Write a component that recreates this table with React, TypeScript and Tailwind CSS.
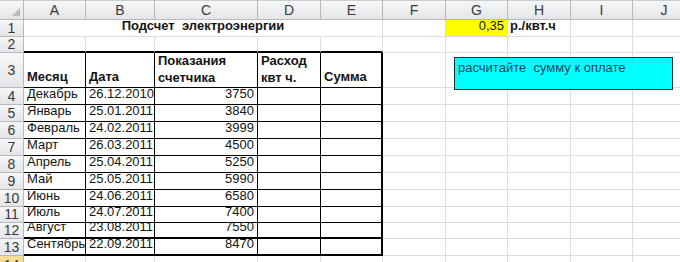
const COLS = ['A', 'B', 'C', 'D', 'E', 'F', 'G', 'H', 'I', 'J']

const rows = [
  ['Декабрь', '26.12.2010', '3750'],
  ['Январь', '25.01.2011', '3840'],
  ['Февраль', '24.02.2011', '3999'],
  ['Март', '26.03.2011', '4500'],
  ['Апрель', '25.04.2011', '5250'],
  ['Май', '25.05.2011', '5990'],
  ['Июнь', '24.06.2011', '6580'],
  ['Июль', '24.07.2011', '7400'],
  ['Август', '23.08.2011', '7550'],
  ['Сентябрь', '22.09.2011', '8470'],
]

const grid = 'border-r border-b border-[#dadcdd]'
const head = 'bg-gradient-to-b from-[#f6f7f8] to-[#e3e5e8] border-r border-b border-[#b6babf] text-[#3a3a3a] flex items-center justify-center text-[14px]'

function RowHead({ n, active }: { n: number; active?: boolean }) {
  return (
    <div className={active ? 'bg-[#f5dd93] border-r border-b border-[#c9b27a] text-[#3a3a3a] flex items-center justify-center text-[14px]' : head}>
      {n}
    </div>
  )
}

function Blank({ n }: { n: number }) {
  return (
    <>
      {Array.from({ length: n }).map((_, i) => (
        <div key={i} className={grid} />
      ))}
    </>
  )
}

// table cell border: thin black inside, heavier on the right and bottom edges
function tb(col: number, row: number) {
  const right = col === 4 ? 'border-r-2' : 'border-r'
  const bottom = row >= 12 ? 'border-b-2' : 'border-b'
  return `${right} ${bottom} border-black`
}

export default function App() {
  return (
    <div className="relative w-[680px] h-[262px] overflow-hidden bg-white text-[13px] text-[#141414]" style={{ fontFamily: '"Liberation Sans", Arial, sans-serif' }}>
      <div className="grid grid-cols-[24px_62px_69px_103px_63px_62px_63px_62px_63px_62px_63px] grid-rows-[20px_17px_16px_35px_17px_17px_17px_17px_17px_17px_17px_16px_16px_17px_20px]">
        {/* column headers */}
        <div className={`${head} relative border-t border-t-[#c9ccd0]`}>
          <svg className="absolute right-[3px] bottom-[3px]" width="8" height="8" viewBox="0 0 8 8">
            <path d="M8 0 L8 8 L0 8 Z" fill="#b9bcc0" />
          </svg>
        </div>
        {COLS.map((c) => (
          <div key={c} className={`${head} border-t border-t-[#c9ccd0]`}>{c}</div>
        ))}

        {/* row 1 */}
        <RowHead n={1} />
        <div className={`col-span-5 ${grid} flex items-end justify-center pb-[1px] font-bold`}>Подсчет&nbsp; электроэнергии</div>
        <div className={grid} />
        <div className="bg-[#ffff00] border-r border-b border-[#dadcdd] flex items-end justify-end px-[3px] pb-[1px]">0,35</div>
        <div className={`${grid} flex items-end px-[2px] pb-[1px] font-bold whitespace-nowrap`}>р./квт.ч</div>
        <Blank n={2} />

        {/* row 2 */}
        <RowHead n={2} />
        {[0, 1, 2, 3, 4].map((i) => (
          <div key={i} className={i === 4 ? 'border-r border-b-2 border-r-[#dadcdd] border-b-black' : 'border-r border-b-2 border-r-[#dadcdd] border-b-black'} />
        ))}
        <Blank n={5} />

        {/* row 3: table header */}
        <RowHead n={3} />
        <div className={`${tb(0, 3)} flex items-end px-[3px] pb-[1px] font-bold`}>Месяц</div>
        <div className={`${tb(1, 3)} flex items-end px-[3px] pb-[1px] font-bold`}>Дата</div>
        <div className={`${tb(2, 3)} flex items-end px-[3px] pb-[1px] font-bold leading-[17px]`}>Показания<br />счетчика</div>
        <div className={`${tb(3, 3)} flex items-end px-[3px] pb-[1px] font-bold leading-[17px]`}>Расход<br />квт ч.</div>
        <div className={`${tb(4, 3)} flex items-end px-[3px] pb-[1px] font-bold`}>Сумма</div>
        <Blank n={5} />

        {rows.map(([month, date, value], i) => {
          const r = i + 4
          return (
            <div key={r} className="contents">
              <RowHead n={r} />
              <div className={`${tb(0, r)} flex items-end px-[3px] pb-[1px] whitespace-nowrap`}>{month}</div>
              <div className={`${tb(1, r)} flex items-end px-[3px] pb-[1px]`}>{date}</div>
              <div className={`${tb(2, r)} flex items-end justify-end px-[3px] pb-[1px]`}>{value}</div>
              <div className={tb(3, r)} />
              <div className={tb(4, r)} />
              <Blank n={5} />
            </div>
          )
        })}

        {/* row 14 */}
        <RowHead n={14} active />
        <Blank n={10} />
      </div>

      {/* text box floating over the sheet */}
      <div className="absolute left-[454px] top-[57px] w-[219px] h-[33px] bg-[#00ffff] border border-[#1e3340] px-[3px] pt-[1px] text-[#1f3f5f] text-[13px] leading-[17px]">
        расчитайте&nbsp; сумму к оплате
      </div>
    </div>
  )
}
